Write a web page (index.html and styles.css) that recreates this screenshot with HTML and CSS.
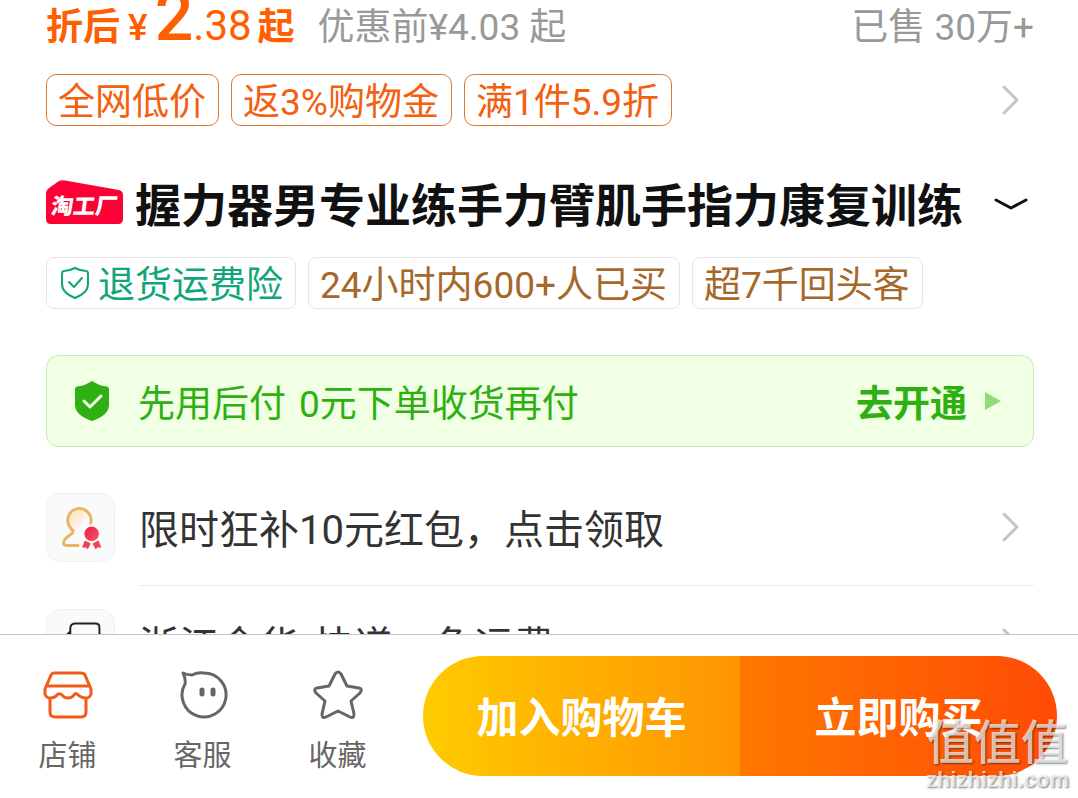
FILE: index.html
```
<!DOCTYPE html>
<html lang="zh-CN">
<head>
    <meta charset="UTF-8">
    <meta name="viewport" content="width=device-width, initial-scale=1.0">
    <title>握力器男专业练手力臂肌手指力康复训练</title>
    <link rel="stylesheet" href="styles.css">
</head>
<body>
    <main class="content">
        <div class="price-row">
            <span class="price-label">折后</span>
            <span class="price-symbol">¥</span>
            <span class="price-int">2</span>
            <span class="price-dec">.38</span>
            <span class="price-label price-suffix">起</span>
            <span class="price-origin">优惠前¥4.03 起</span>
            <span class="sold">已售 30万+</span>
        </div>

        <div class="tag-row promo-row">
            <span class="tag promo">全网低价</span>
            <span class="tag promo">返3%购物金</span>
            <span class="tag promo">满1件5.9折</span>
            <a class="arrow-link" href="#promo" aria-label="优惠详情">
                <svg class="arrow" viewBox="0 0 20 32"><path d="M3 3l13 13L3 29"/></svg>
            </a>
        </div>

        <div class="title-row">
            <svg class="badge" viewBox="0 0 78 44" role="img" aria-label="淘工厂">
                <path d="M13 1Q16 0 19 0.500L73 10Q77 11 77 15V39Q77 44 72 44H5Q0 44 0 39V13Q0 10 3 8Z" fill="#ff0036"/>
                <text class="badge-text" x="9" y="34" transform="skewX(-8)">淘工厂</text>
            </svg>
            <h1>握力器男专业练手力臂肌手指力康复训练</h1>
            <button class="expand" type="button" aria-label="展开标题">
                <svg viewBox="0 0 34 12"><path d="M2 2l15 8 15-8"/></svg>
            </button>
        </div>

        <div class="tag-row">
            <span class="tag service">
                <svg class="shield-line" viewBox="0 0 30 34"><path d="M15 2Q21 5 26 5Q28 5 28 8V18Q28 27 15 32Q2 27 2 18V8Q2 5 4 5Q9 5 15 2Z"/><path d="M9 16l5 5 8-9"/></svg>
                退货运费险
            </span>
            <span class="tag brown">24小时内600+人已买</span>
            <span class="tag brown">超7千回头客</span>
        </div>

        <a class="pay-later" href="#paylater">
            <svg class="shield" viewBox="0 0 34 40"><path d="M17 0Q25 5 32 5.500Q34 6 34 8V24Q34 34 17 40Q0 34 0 24V8Q0 6 2 5.500Q9 5 17 0Z" fill="#2eb012"/><path d="M9 20l6 6 11-11" fill="none" stroke="#f3ffe6" stroke-width="3" stroke-linecap="round" stroke-linejoin="round"/></svg>
            <span class="pay-text"><span>先用后付</span><span>0元下单收货再付</span></span>
            <span class="pay-action">去开通</span>
            <svg class="triangle" viewBox="0 0 16 20"><path d="M0 1l16 9-16 9z"/></svg>
        </a>

        <a class="info-row" href="#coupon">
            <span class="info-icon">
                <svg viewBox="0 0 69 69">
                    <defs>
                        <linearGradient id="skin" x1="0" y1="0" x2="1" y2="1">
                            <stop offset="0" stop-color="#ffe0c0"/>
                            <stop offset="0.600" stop-color="#fff0e2"/>
                            <stop offset="0.650" stop-color="#fafafa"/>
                        </linearGradient>
                        <linearGradient id="medal" x1="0" y1="0" x2="1" y2="1">
                            <stop offset="0" stop-color="#f0184a"/>
                            <stop offset="1" stop-color="#fa5868"/>
                        </linearGradient>
                    </defs>
                    <circle cx="33" cy="27" r="11" fill="url(#skin)"/>
                    <path d="M45 30A12 12 0 1 0 23 33Q25 37 27 38Q27 40 24 42Q18 46 17 50Q17 53 20 53H32" fill="none" stroke="#e8b660" stroke-width="3" stroke-linecap="round" stroke-linejoin="round"/>
                    <circle cx="46" cy="41" r="7.500" fill="url(#medal)"/>
                    <path d="M39 48l6 3-3 6-2-2-4 0zM53 48l-6 3 3 6 2-2 4 0z" fill="#f2405c"/>
                </svg>
            </span>
            <span class="info-body">
                <span class="info-text">限时狂补10元红包，点击领取</span>
                <svg class="arrow" viewBox="0 0 20 32"><path d="M3 3l13 13L3 29"/></svg>
            </span>
        </a>

        <a class="info-row" href="#delivery">
            <span class="info-icon">
                <svg viewBox="0 0 69 69"><path d="M54 46V18Q54 14 50 14H29Q25 14 24 18V22L15 31V46H54M24 22V30H15" fill="none" stroke="#222" stroke-width="2" stroke-linejoin="round"/></svg>
            </span>
            <span class="info-body">
                <span class="info-text"><span>浙江金华</span><span>快递：免运费</span></span>
                <svg class="arrow" viewBox="0 0 20 32"><path d="M3 3l13 13L3 29"/></svg>
            </span>
        </a>
    </main>

    <footer class="bottom-bar">
        <nav class="shortcuts">
            <a class="shortcut" href="#shop">
                <svg class="shop" viewBox="0 0 50 50"><path d="M11 3H38Q41 3 42 5L48 19V24Q47 28 43 28Q38 28 34 24Q32 23 31 25Q29 28 25 28Q21 28 19 25Q17 23 15 24Q12 28 7 28Q3 28 2 24V19L8 5Q9 3 11 3ZM4 16H46M7 28V42Q7 47 12 47H38Q43 47 43 42V28"/></svg>
                <span>店铺</span>
            </a>
            <a class="shortcut" href="#service">
                <svg viewBox="0 0 50 50"><path d="M5 3Q9 5 14 5Q20 2 26 3A22 22 0 1 1 7 14Q8 9 5 3Z"/><path class="eyes" d="M24 20v4M35 20v4"/></svg>
                <span>客服</span>
            </a>
            <a class="shortcut" href="#favorite">
                <svg viewBox="0 0 50 50"><path d="M22 4Q25 0 28 4L34 16L46 18Q50 19 47 23L38 31L41 44Q41 49 37 47L25 41L13 47Q9 49 9 44L12 31L3 23Q0 19 4 18L16 16Z"/></svg>
                <span>收藏</span>
            </a>
        </nav>
        <div class="actions">
            <button class="btn btn-cart" type="button">加入购物车</button>
            <button class="btn btn-buy" type="button">立即购买</button>
        </div>
    </footer>

    <div class="watermark">
        <span class="watermark-logo">值值值</span>
        <span class="watermark-url">zhizhizhi.com</span>
    </div>
</body>
</html>
```

FILE: styles.css
```
* {
    box-sizing: border-box;
}
body {
    margin: 0;
    height: 100vh;
    display: flex;
    flex-direction: column;
    overflow: hidden;
    position: relative;
    background: #fff;
    color: #333;
    font-family: Roboto, "Noto Sans CJK SC", sans-serif;
    font-size: 37px;
}
a {
    color: inherit;
    text-decoration: none;
}
button {
    border: none;
    padding: 0;
    font-family: inherit;
    cursor: pointer;
}
svg {
    display: block;
    flex: none;
}
.content {
    flex: 1;
    min-height: 0;
    overflow: hidden;
    padding: 0 44px 0 46px;
}

/* price */
.price-row {
    display: flex;
    align-items: baseline;
    height: 50px;
    line-height: 34px;
    color: #ff5f00;
    white-space: nowrap;
}
.price-label {
    font-weight: bold;
}
.price-symbol {
    margin-left: 8px;
    font-weight: 500;
}
.price-int {
    margin-left: 7px;
    font-size: 68px;
    font-weight: 500;
}
.price-dec {
    font-size: 42px;
}
.price-suffix {
    margin-left: 6px;
}
.price-origin {
    margin-left: 23px;
    color: #999;
}
.sold {
    margin-left: auto;
    color: #999;
}

/* tags */
.tag-row {
    display: flex;
    align-items: center;
    gap: 12px;
}
.tag {
    display: flex;
    align-items: center;
    height: 52px;
    padding: 6px 12px 0 11px;
    border: 1px solid #e6e6e6;
    border-radius: 8px;
    line-height: 44px;
    white-space: nowrap;
}
.promo-row {
    margin-top: 24px;
}
.promo {
    border-color: #e07830;
    border-radius: 10px;
    color: #f26010;
}
.service {
    color: #12a57c;
}
.brown {
    color: #a5682a;
}
.shield-line {
    width: 30px;
    height: 34px;
    margin: 0 8px 6px 2px;
    fill: none;
    stroke: #12a57c;
    stroke-width: 2;
    stroke-linecap: round;
    stroke-linejoin: round;
}
.arrow-link {
    margin-left: auto;
}
.arrow {
    width: 20px;
    height: 32px;
    margin-right: 13px;
    fill: none;
    stroke: #c4c4c4;
    stroke-width: 3;
    stroke-linecap: round;
    stroke-linejoin: round;
}

/* title */
.title-row {
    display: flex;
    align-items: center;
    height: 60px;
    margin: 48px 0 23px;
}
.badge {
    width: 78px;
    height: 44px;
    margin-bottom: 4px;
}
.badge-text {
    fill: #fff;
    font-size: 22px;
    font-weight: 900;
}
h1 {
    margin: 0 0 0 11px;
    padding-top: 4px;
    color: #111;
    font-size: 46px;
    line-height: 60px;
    font-weight: bold;
    white-space: nowrap;
}
.expand {
    margin: 0 6px 0 auto;
    background: none;
}
.expand svg {
    width: 34px;
    height: 12px;
    fill: none;
    stroke: #111;
    stroke-width: 3;
    stroke-linecap: round;
    stroke-linejoin: round;
}

/* pay later */
.pay-later {
    display: flex;
    align-items: center;
    height: 92px;
    margin: 46px 0;
    padding: 0 32px 0 28px;
    border: 1px solid #c6edb2;
    border-radius: 12px;
    background: #f1ffe4;
    color: #2eb012;
    white-space: nowrap;
}
.shield {
    width: 34px;
    height: 40px;
}
.pay-text {
    display: flex;
    gap: 13px;
    margin-left: 29px;
}
.pay-action {
    margin-left: auto;
    font-weight: bold;
}
.triangle {
    width: 16px;
    height: 20px;
    margin-left: 18px;
    fill: #8fdc78;
}

/* info rows */
.info-row {
    display: flex;
    gap: 24px;
    height: 116px;
    font-size: 40px;
}
.info-icon {
    flex: none;
    width: 69px;
    height: 69px;
    border: 1px solid #f1f1f1;
    border-radius: 14px;
    background: #fafafa;
}
.info-body {
    flex: 1;
    display: flex;
    justify-content: space-between;
    align-items: center;
    height: 93px;
    padding-bottom: 24px;
    border-bottom: 1px solid #ebebeb;
    white-space: nowrap;
}
.info-text {
    display: flex;
    gap: 15px;
}

/* bottom bar */
.bottom-bar {
    flex: none;
    display: flex;
    align-items: flex-start;
    justify-content: space-between;
    height: 164px;
    padding: 21px 21px 0 0;
    border-top: 1px solid #c4c4c4;
    background: #fff;
}
.shortcuts {
    display: flex;
    padding-top: 14px;
}
.shortcut {
    width: 135px;
    display: flex;
    flex-direction: column;
    align-items: center;
    gap: 16px;
    color: #666;
    font-size: 29px;
    line-height: 40px;
}
.shortcut svg {
    width: 50px;
    height: 50px;
    fill: none;
    stroke: #666;
    stroke-width: 3;
    stroke-linecap: round;
    stroke-linejoin: round;
}
.shortcut .shop {
    stroke: #f25a18;
}
.shortcut .eyes {
    stroke-width: 5;
}
.actions {
    display: flex;
    width: 634px;
    height: 120px;
    border-radius: 60px;
    overflow: hidden;
}
.btn {
    flex: 1;
    padding-bottom: 4px;
    color: #fff;
    font-size: 42px;
    font-weight: bold;
}
.btn-cart {
    background: linear-gradient(90deg, #ffcb00, #ff9402);
}
.btn-buy {
    background: linear-gradient(90deg, #ff7800, #ff4b05);
}

/* watermark */
.watermark {
    position: absolute;
    right: 9px;
    bottom: 6px;
    display: flex;
    flex-direction: column;
    align-items: center;
    color: rgba(255, 255, 255, 0.7);
    text-shadow: 1px 1px 2px rgba(0, 0, 0, 0.5);
    pointer-events: none;
}
.watermark-logo {
    font-size: 47px;
    line-height: 50px;
    font-weight: 500;
}
.watermark-url {
    font-family: "Liberation Sans", sans-serif;
    font-size: 22px;
    line-height: 24px;
    font-weight: bold;
}
```
